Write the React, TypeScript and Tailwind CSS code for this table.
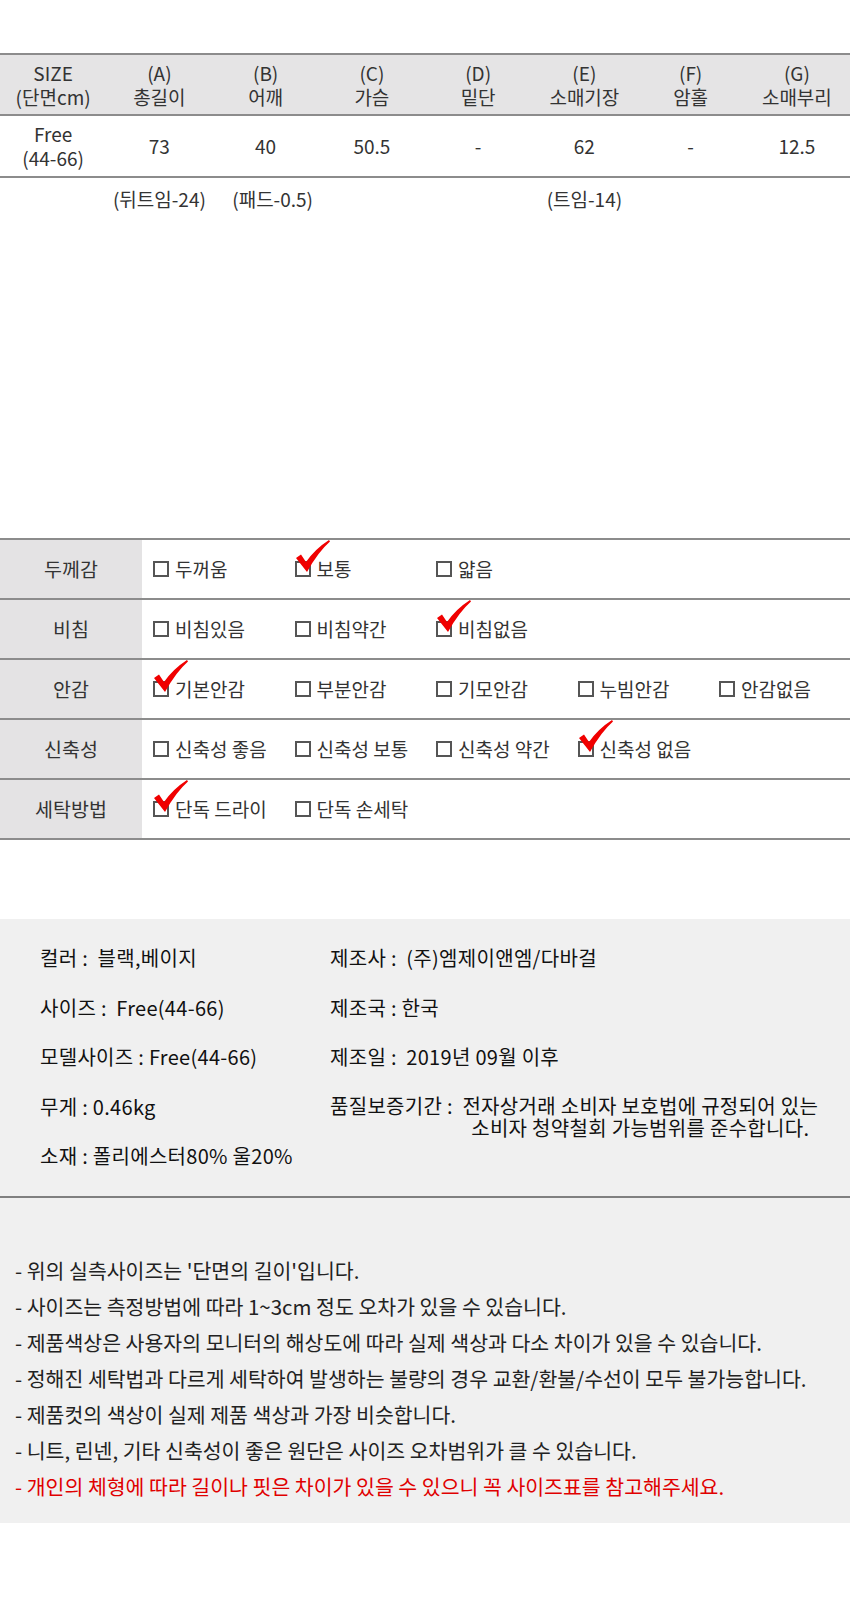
import React from 'react';

const font = { fontFamily: '"Noto Sans CJK KR", "Noto Sans", sans-serif' };

const headers = [
  ['SIZE', '(단면cm)'],
  ['(A)', '총길이'],
  ['(B)', '어깨'],
  ['(C)', '가슴'],
  ['(D)', '밑단'],
  ['(E)', '소매기장'],
  ['(F)', '암홀'],
  ['(G)', '소매부리'],
];

const values = ['73', '40', '50.5', '-', '62', '-', '12.5'];

const options: { label: string; items: string[]; checked: number }[] = [
  { label: '두께감', items: ['두꺼움', '보통', '얇음'], checked: 1 },
  { label: '비침', items: ['비침있음', '비침약간', '비침없음'], checked: 2 },
  { label: '안감', items: ['기본안감', '부분안감', '기모안감', '누빔안감', '안감없음'], checked: 0 },
  { label: '신축성', items: ['신축성 좋음', '신축성 보통', '신축성 약간', '신축성 없음'], checked: 3 },
  { label: '세탁방법', items: ['단독 드라이', '단독 손세탁'], checked: 0 },
];

const notes = [
  "- 위의 실측사이즈는 '단면의 길이'입니다.",
  '- 사이즈는 측정방법에 따라 1~3cm 정도 오차가 있을 수 있습니다.',
  '- 제품색상은 사용자의 모니터의 해상도에 따라 실제 색상과 다소 차이가 있을 수 있습니다.',
  '- 정해진 세탁법과 다르게 세탁하여 발생하는 불량의 경우 교환/환불/수선이 모두 불가능합니다.',
  '- 제품컷의 색상이 실제 제품 색상과 가장 비슷합니다.',
  '- 니트, 린넨, 기타 신축성이 좋은 원단은 사이즈 오차범위가 클 수 있습니다.',
];

const Check = () => (
  <svg className="absolute left-[-2px] top-[-23px]" width="36" height="33" viewBox="0 0 36 33">
    <path d="M1 18 L6 14.5 L11 22 Q20 9 34 0 L35 1.5 Q23 12 12 32 Z" fill="#f00000" />
  </svg>
);

const Box = ({ checked }: { checked: boolean }) => (
  <span className="relative inline-block w-[16px] h-[16px] border-2 border-[#555] shrink-0">
    {checked && <Check />}
  </span>
);

const App = () => {
  return (
    <div className="w-[850px] h-[1600px] bg-white text-[#333]" style={font}>
      <div className="h-[53px]" />

      {/* Size table */}
      <div className="border-t-2 border-[#8c8c8c]">
        <div className="grid grid-cols-8 bg-[#e5e4e5] h-[59px] items-center text-[19px] leading-[24px] text-[#333] text-center">
          {headers.map(([a, b]) => (
            <div key={a}>
              <div>{a}</div>
              <div>{b}</div>
            </div>
          ))}
        </div>
        <div className="border-t-2 border-[#8c8c8c] grid grid-cols-8 h-[62px] items-center text-[19px] leading-[24px] text-center">
          <div>
            <div>Free</div>
            <div>(44-66)</div>
          </div>
          {values.map((v, i) => (
            <div key={i}>{v}</div>
          ))}
        </div>
        <div className="border-t-2 border-[#8c8c8c] grid grid-cols-8 h-[44px] items-center text-[19px] text-center">
          <div />
          <div>(뒤트임-24)</div>
          <div className="pl-[14px]">(패드-0.5)</div>
          <div />
          <div />
          <div>(트임-14)</div>
        </div>
      </div>

      <div className="h-[318px]" />

      {/* Option table */}
      <div className="border-t-2 border-[#8c8c8c]">
        {options.map((row) => (
          <div key={row.label} className="flex h-[60px] border-b-2 border-[#8c8c8c]">
            <div className="w-[142px] shrink-0 bg-[#e4e3e4] flex items-center justify-center text-[19.5px] text-[#333]">
              {row.label}
            </div>
            <div className="flex pl-[11px] items-center">
              {row.items.map((it, i) => (
                <div key={it} className="w-[141.5px] shrink-0 flex items-center gap-[6px] text-[19px] text-[#333]">
                  <Box checked={i === row.checked} />
                  <span className="whitespace-nowrap">{it}</span>
                </div>
              ))}
            </div>
          </div>
        ))}
      </div>

      <div className="h-[79px]" />

      {/* Info box */}
      <div className="bg-[#f0f0f0] h-[279px] border-b-2 border-[#808080] pt-[27px] pl-[40px] flex text-[20px] leading-[24px] tracking-[0.3px] text-[#111]">
        <div className="w-[290px] shrink-0 flex flex-col gap-[25.5px]">
          <div>컬러 :&nbsp; 블랙,베이지</div>
          <div>사이즈 :&nbsp; Free(44-66)</div>
          <div>모델사이즈 : Free(44-66)</div>
          <div>무게 : 0.46kg</div>
          <div>소재 : 폴리에스터80% 울20%</div>
        </div>
        <div className="flex flex-col gap-[25.5px]">
          <div>제조사 :&nbsp; (주)엠제이앤엠/다바걸</div>
          <div>제조국 : 한국</div>
          <div>제조일 :&nbsp; 2019년 09월 이후</div>
          <div className="flex leading-[22px]">
            <span className="whitespace-pre">품질보증기간 :  </span>
            <div className="text-center whitespace-nowrap">
              <div>전자상거래 소비자 보호법에 규정되어 있는</div>
              <div>소비자 청약철회 가능범위를 준수합니다.</div>
            </div>
          </div>
        </div>
      </div>

      {/* Notes */}
      <div className="bg-[#f0f0f0] h-[325px] pt-[54px] pl-[15px] text-[20.5px] leading-[36px] text-[#222]">
        {notes.map((n) => (
          <div key={n} className="whitespace-nowrap">{n}</div>
        ))}
        <div className="whitespace-nowrap text-[#e00000]">
          - 개인의 체형에 따라 길이나 핏은 차이가 있을 수 있으니 꼭 사이즈표를 참고해주세요.
        </div>
      </div>
    </div>
  );
};

export default App;
